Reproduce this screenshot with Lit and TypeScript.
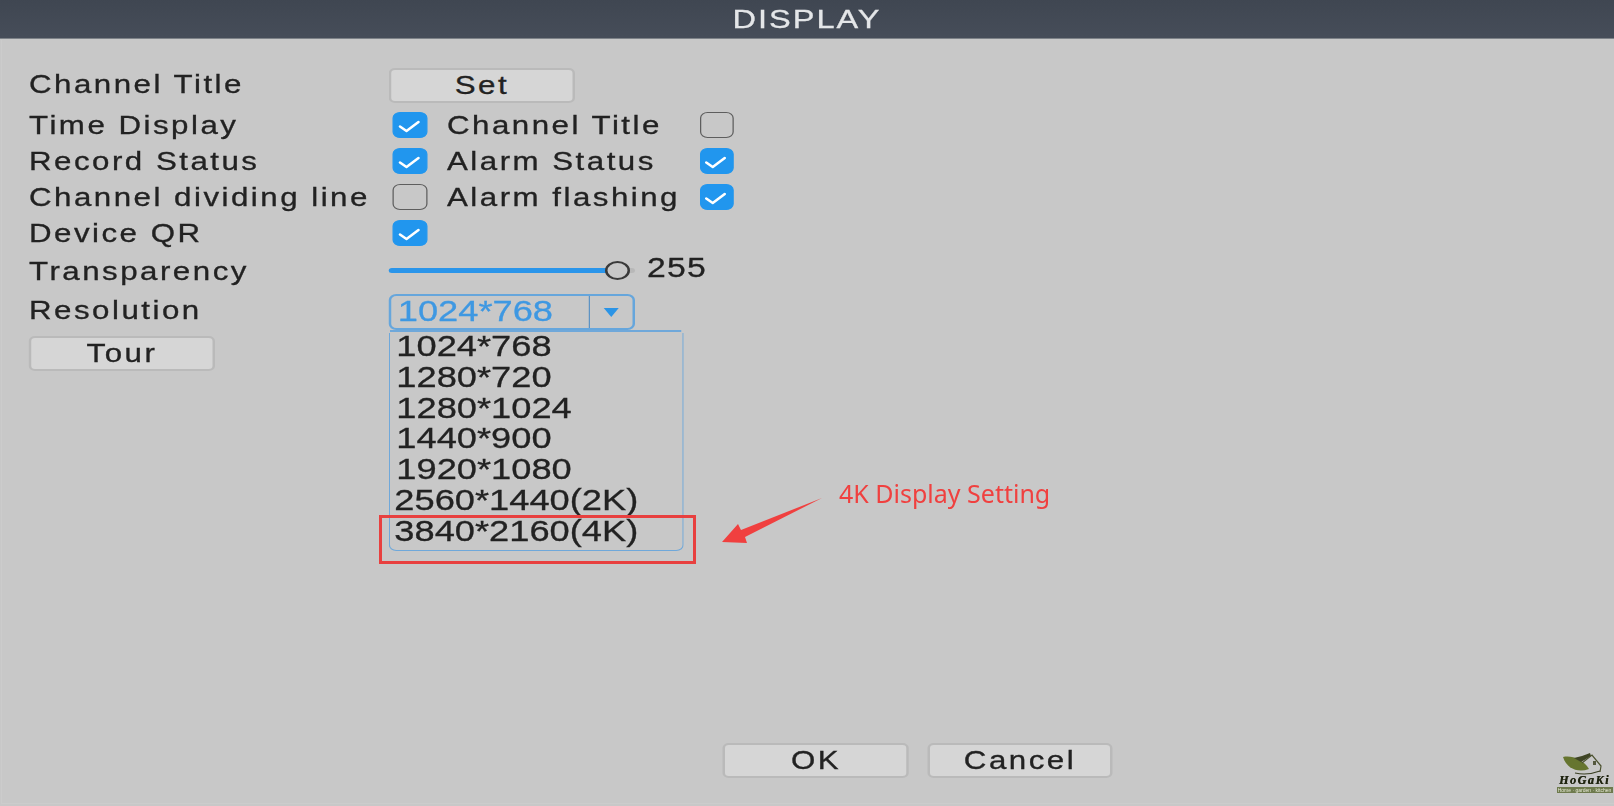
import { LitElement, html, css, svg } from "lit";
import { customElement } from "lit/decorators.js";

const CHECK = svg`<path d="M7.5 14.5 L14 19 L26 10" fill="none" stroke="#fff" stroke-width="2.6" stroke-linecap="round" stroke-linejoin="round"/>`;
const OPTIONS = ["1024*768", "1280*720", "1280*1024", "1440*900", "1920*1080", "2560*1440(2K)", "3840*2160(4K)"];

@customElement("app-root")
export class AppRoot extends LitElement {
  static styles = css`
    :host {
      display: block;
      position: relative;
      width: 1614px;
      height: 806px;
      overflow: hidden;
      background: #c8c8c8;
      font-family: "Liberation Sans", Arial, sans-serif;
      color: #222;
    }
    :host::after {
      content: "";
      position: absolute;
      left: 1px;
      top: 40px;
      right: 0;
      bottom: 2px;
      border-left: 1px solid #cccccc;
      border-bottom: 1px solid #cccccc;
      pointer-events: none;
    }
    .stage {
      width: 1291.2px;
      height: 806px;
      display: flex;
      flex-direction: column;
      transform: scaleX(1.25);
      transform-origin: 0 0;
      filter: blur(0.5px);
      -webkit-text-stroke: 0.3px currentColor;
    }
    .header {
      box-sizing: border-box;
      height: 41px;
      margin: -2px -4px 0;
      padding-top: 2px;
      flex: none;
      display: flex;
      align-items: center;
      justify-content: center;
      background: linear-gradient(#3f4651, #464d59);
      border-bottom: 1px solid #7d8288;
      color: #e4e6e8;
      font-size: 26px;
      letter-spacing: 1.6px;
    }
    .main {
      flex: 1;
      display: flex;
      flex-direction: column;
      padding: 29px 0 0 23.2px;
      font-size: 25px;
      letter-spacing: 2px;
    }
    .row {
      display: grid;
      grid-template-columns: 288px 46.4px 199.2px 30px;
      align-items: center;
      height: 26px;
      margin-top: 10px;
      white-space: nowrap;
    }
    .row.first { height: 35px; margin-top: 0; margin-bottom: -1px; }
    .row.first > .lab, .row.res > .lab { margin-top: -4px; }
    .row.slider { margin-top: 11px; }
    .row.res { height: 36px; margin-top: 11px; }
    .lab { line-height: 26px; }
    .btn {
      box-sizing: border-box;
      width: 148.8px;
      height: 35px;
      display: flex;
      align-items: center;
      justify-content: center;
      background: #d6d6d6;
      border: 2px solid #bababa;
      border-radius: 5px;
      color: #222;
    }
    .cell-wide { grid-column: 2 / 5; position: relative; }
    .box {
      box-sizing: border-box;
      width: 27.2px;
      height: 26px;
      margin-left: 3.2px;
      border-radius: 6px;
      background: #c8c8c8;
      border: 1.5px solid #5e5e5e;
    }
    .box.on { background: #2196ee; border-color: #2196ee; }
    .box svg { display: block; width: 27.2px; height: 26px; margin: -1.5px; }
    .slide { display: flex; align-items: center; }
    .track {
      position: relative;
      width: 196.8px;
      height: 5px;
      border-radius: 3px;
      background: linear-gradient(90deg, #2a95ea 93%, #b8b8b8 93%);
    }
    .thumb {
      position: absolute;
      left: 173px;
      top: -7px;
      box-sizing: border-box;
      width: 20px;
      height: 19px;
      border-radius: 50%;
      background: #c8c8c8;
      border: 2px solid #3a3a3a;
    }
    .val { margin-left: 9.6px; font-size: 27px; letter-spacing: 1px; margin-top: -4px; }
    .select {
      box-sizing: border-box;
      width: 196.8px;
      height: 36px;
      display: flex;
      border: 2px solid #66a6dc;
      border-radius: 6px;
      color: #3e98e2;
      font-size: 29px;
      letter-spacing: 0;
    }
    .sel-text { flex: 1; padding-left: 5px; line-height: 30px; }
    .sel-arrow {
      width: 34px;
      display: flex;
      align-items: center;
      justify-content: center;
      border-left: 1.5px solid #5d93c4;
    }
    .sel-arrow i {
      width: 0;
      height: 0;
      border-left: 6px solid transparent;
      border-right: 6px solid transparent;
      border-top: 9px solid #2b94e6;
    }
    .list {
      position: absolute;
      left: 0;
      top: 39px;
      box-sizing: border-box;
      width: 236px;
      height: 218px;
      padding: 0 0 0 4.9px;
      border: 1.5px solid #6fa8da;
      border-top: none;
      border-radius: 0 0 6px 6px;
      font-size: 29px;
      letter-spacing: 0;
      color: #222;
    }
    .list::before {
      content: "";
      position: absolute;
      left: 0;
      top: -3px;
      width: 233px;
      height: 2px;
      background: #6fa8da;
    }
    .opt { height: 30.8px; line-height: 30.8px; }
    .opt.wide { margin-left: -1.6px; }
    .opt:first-child { margin-top: -2px; }
    .tour { margin-top: 6px; }
    .footer {
      display: flex;
      gap: 14.4px;
      padding: 0 0 28px 578.4px;
      font-size: 25px;
      letter-spacing: 2px;
    }
    .note-box {
      position: absolute;
      left: 379px;
      top: 515px;
      box-sizing: border-box;
      width: 317px;
      height: 49px;
      border: 3px solid #e8403f;
    }
    .note-arrow { position: absolute; left: 715px; top: 490px; width: 115px; height: 60px; }
    .note {
      position: absolute;
      left: 839px;
      top: 476px;
      font-family: "Noto Sans", sans-serif;
      font-size: 25px;
      line-height: 34px;
      color: #f0403f;
      white-space: nowrap;
    }
    .logo {
      position: absolute;
      left: 1555px;
      top: 752px;
      width: 59px;
      display: flex;
      flex-direction: column;
      align-items: center;
      filter: blur(0.4px);
    }
    .logo svg { display: block; width: 40px; height: 23px; margin-left: -5px; }
    .logo-name {
      font-family: "Liberation Serif", serif;
      font-weight: bold;
      font-style: italic;
      font-size: 12px;
      line-height: 11px;
      letter-spacing: 1.6px;
      color: #1f2410;
      text-shadow: 0.4px 0 0 #1f2410;
    }
    .logo-tag {
      margin-top: 1px;
      width: 56px;
      height: 6px;
      background: #6e7a4d;
      color: #e8ead8;
      font-size: 5px;
      line-height: 6px;
      text-align: center;
      white-space: nowrap;
      overflow: hidden;
    }
  `;

  private box(on: boolean) {
    return html`<div class="box ${on ? "on" : ""}">
      ${on ? html`<svg viewBox="0 0 34 26" preserveAspectRatio="none">${CHECK}</svg>` : ""}
    </div>`;
  }

  render() {
    return html`
      <div class="stage">
        <div class="header">DISPLAY</div>
        <div class="main">
          <div class="row first">
            <span class="lab">Channel Title</span>
            <div class="cell-wide"><div class="btn">Set</div></div>
          </div>
          <div class="row">
            <span class="lab">Time Display</span>${this.box(true)}
            <span class="lab">Channel Title</span>${this.box(false)}
          </div>
          <div class="row">
            <span class="lab">Record Status</span>${this.box(true)}
            <span class="lab">Alarm Status</span>${this.box(true)}
          </div>
          <div class="row">
            <span class="lab">Channel dividing line</span>${this.box(false)}
            <span class="lab">Alarm flashing</span>${this.box(true)}
          </div>
          <div class="row">
            <span class="lab">Device QR</span>${this.box(true)}
          </div>
          <div class="row slider">
            <span class="lab">Transparency</span>
            <div class="cell-wide slide">
              <div class="track"><div class="thumb"></div></div>
              <span class="val">255</span>
            </div>
          </div>
          <div class="row res">
            <span class="lab">Resolution</span>
            <div class="cell-wide">
              <div class="select">
                <span class="sel-text">1024*768</span>
                <span class="sel-arrow"><i></i></span>
              </div>
              <div class="list">
                ${OPTIONS.map((o) => html`<div class="opt ${o.includes("K") ? "wide" : ""}">${o}</div>`)}
              </div>
            </div>
          </div>
          <div class="btn tour">Tour</div>
        </div>
        <div class="footer">
          <div class="btn">OK</div>
          <div class="btn">Cancel</div>
        </div>
      </div>

      <div class="note-box"></div>
      <svg class="note-arrow" viewBox="715 490 115 60">
        <polygon points="822,498 741,530 738,524 722,542 747,543 745,537" fill="#f0403f"/>
      </svg>
      <div class="note">4K Display Setting</div>

      <div class="logo">
        <svg viewBox="0 0 40 23">
          <path d="M1 5 C9 3 21 7 27 17 C16 21 5 17 1 5Z" fill="#66752f"/>
          <path d="M12 6 C17 5 23 3 28 1 L29 4 C24 7 21 9 19 10Z" fill="#3f4524"/>
          <path d="M20 11 L30 3 L39 14 L38 20" fill="none" stroke="#4c5230" stroke-width="1.2"/>
          <rect x="31" y="9" width="3" height="4" fill="#55583f"/>
          <path d="M13 21 C22 23 30 22 38 19" fill="none" stroke="#3a3f22" stroke-width="1.1"/>
        </svg>
        <div class="logo-name">HoGaKi</div>
        <div class="logo-tag">Home · garden · kitchen</div>
      </div>
    `;
  }
}
